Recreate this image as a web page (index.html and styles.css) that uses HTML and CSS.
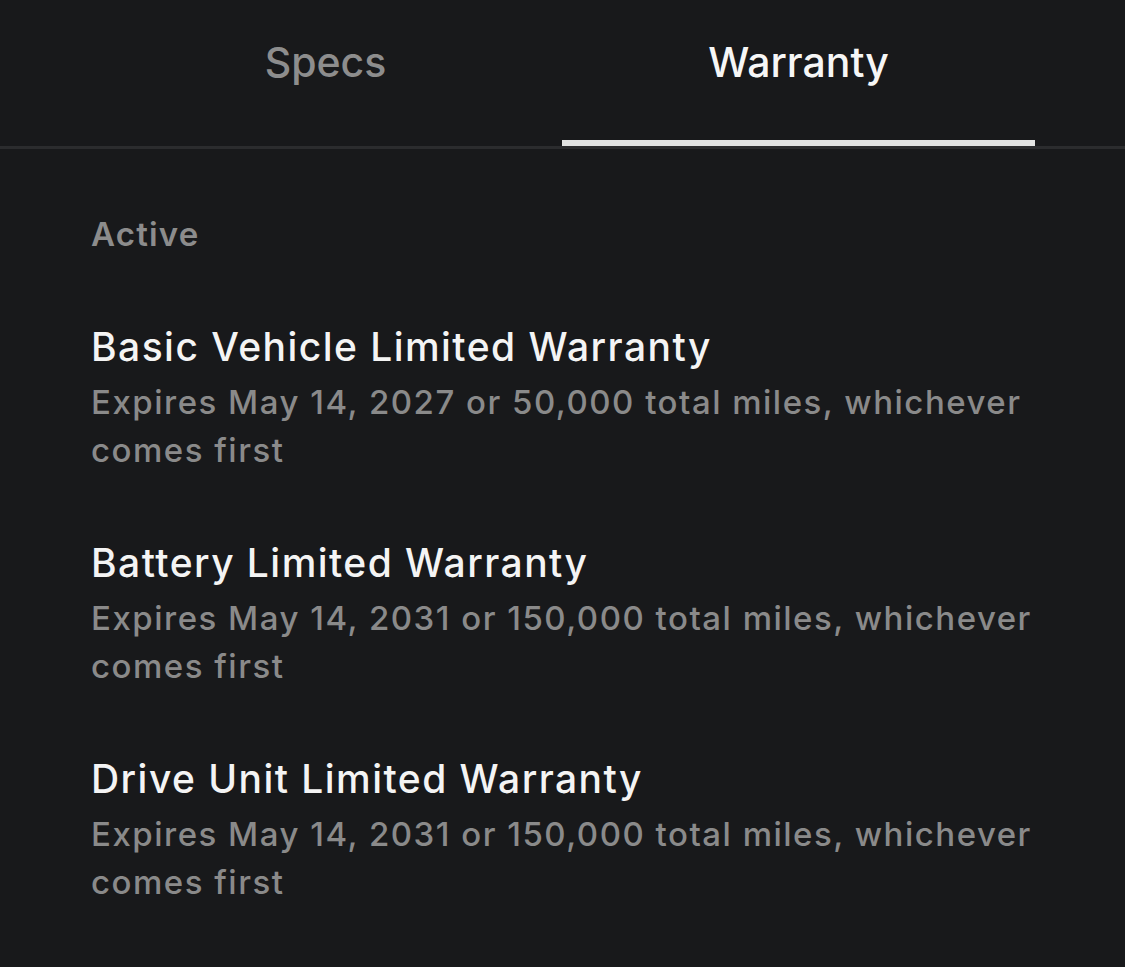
FILE: index.html
```html
<!DOCTYPE html>
<html lang="en">

<head>
  <meta charset="UTF-8" />
  <meta name="viewport" content="width=device-width, initial-scale=1.0" />
  <title>Warranty</title>
  <link rel="stylesheet" href="styles.css">
</head>

<body>
  <div class="tab-bar">
    <div class="tabs">
      <div class="tab">Specs</div>
      <div class="tab active">Warranty</div>
    </div>
  </div>

  <div class="content">
    <h2 class="section-title">Active</h2>

    <div class="warranty-item">
      <h3 class="item-title">Basic Vehicle Limited Warranty</h3>
      <p class="item-desc">Expires May 14, 2027 or 50,000 total miles, whichever comes first</p>
    </div>

    <div class="warranty-item">
      <h3 class="item-title">Battery Limited Warranty</h3>
      <p class="item-desc">Expires May 14, 2031 or 150,000 total miles, whichever comes first</p>
    </div>

    <div class="warranty-item">
      <h3 class="item-title">Drive Unit Limited Warranty</h3>
      <p class="item-desc">Expires May 14, 2031 or 150,000 total miles, whichever comes first</p>
    </div>
  </div>
</body>

</html>
```

FILE: styles.css
```css
body {
  margin: 0;
  padding: 0;
  background-color: #18191b;
  font-family: Inter, "Noto Sans", Arial, sans-serif;
  color: #f4f4f4;
}

.tab-bar {
  border-bottom: 3px solid #2b2c2e;
}

.tabs {
  display: grid;
  grid-template-columns: 1fr 1fr;
  padding: 0 90px 0 89px;
}

.tab {
  text-align: center;
  font-size: 41px;
  font-weight: 500;
  line-height: 50px;
  padding: 37px 0 53px;
  color: #8d8d8d;
  border-bottom: 6px solid transparent;
}

.tab.active {
  color: #f6f6f6;
  border-bottom-color: #e2e3e2;
}

.content {
  padding: 65px 88px 0 91px;
}

.section-title {
  margin: 0;
  font-size: 33px;
  font-weight: 600;
  line-height: 40px;
  letter-spacing: 1.2px;
  color: #8c8c8c;
}

.warranty-item {
  margin-top: 69px;
}

.warranty-item + .warranty-item {
  margin-top: 65px;
}

.item-title {
  margin: 0;
  font-size: 39px;
  font-weight: 500;
  line-height: 48px;
  letter-spacing: 1.45px;
  color: #f4f4f4;
}

.item-desc {
  margin: 7px 0 0;
  font-size: 33px;
  font-weight: 500;
  line-height: 48px;
  letter-spacing: 1.5px;
  color: #8a8a8a;
}
```
